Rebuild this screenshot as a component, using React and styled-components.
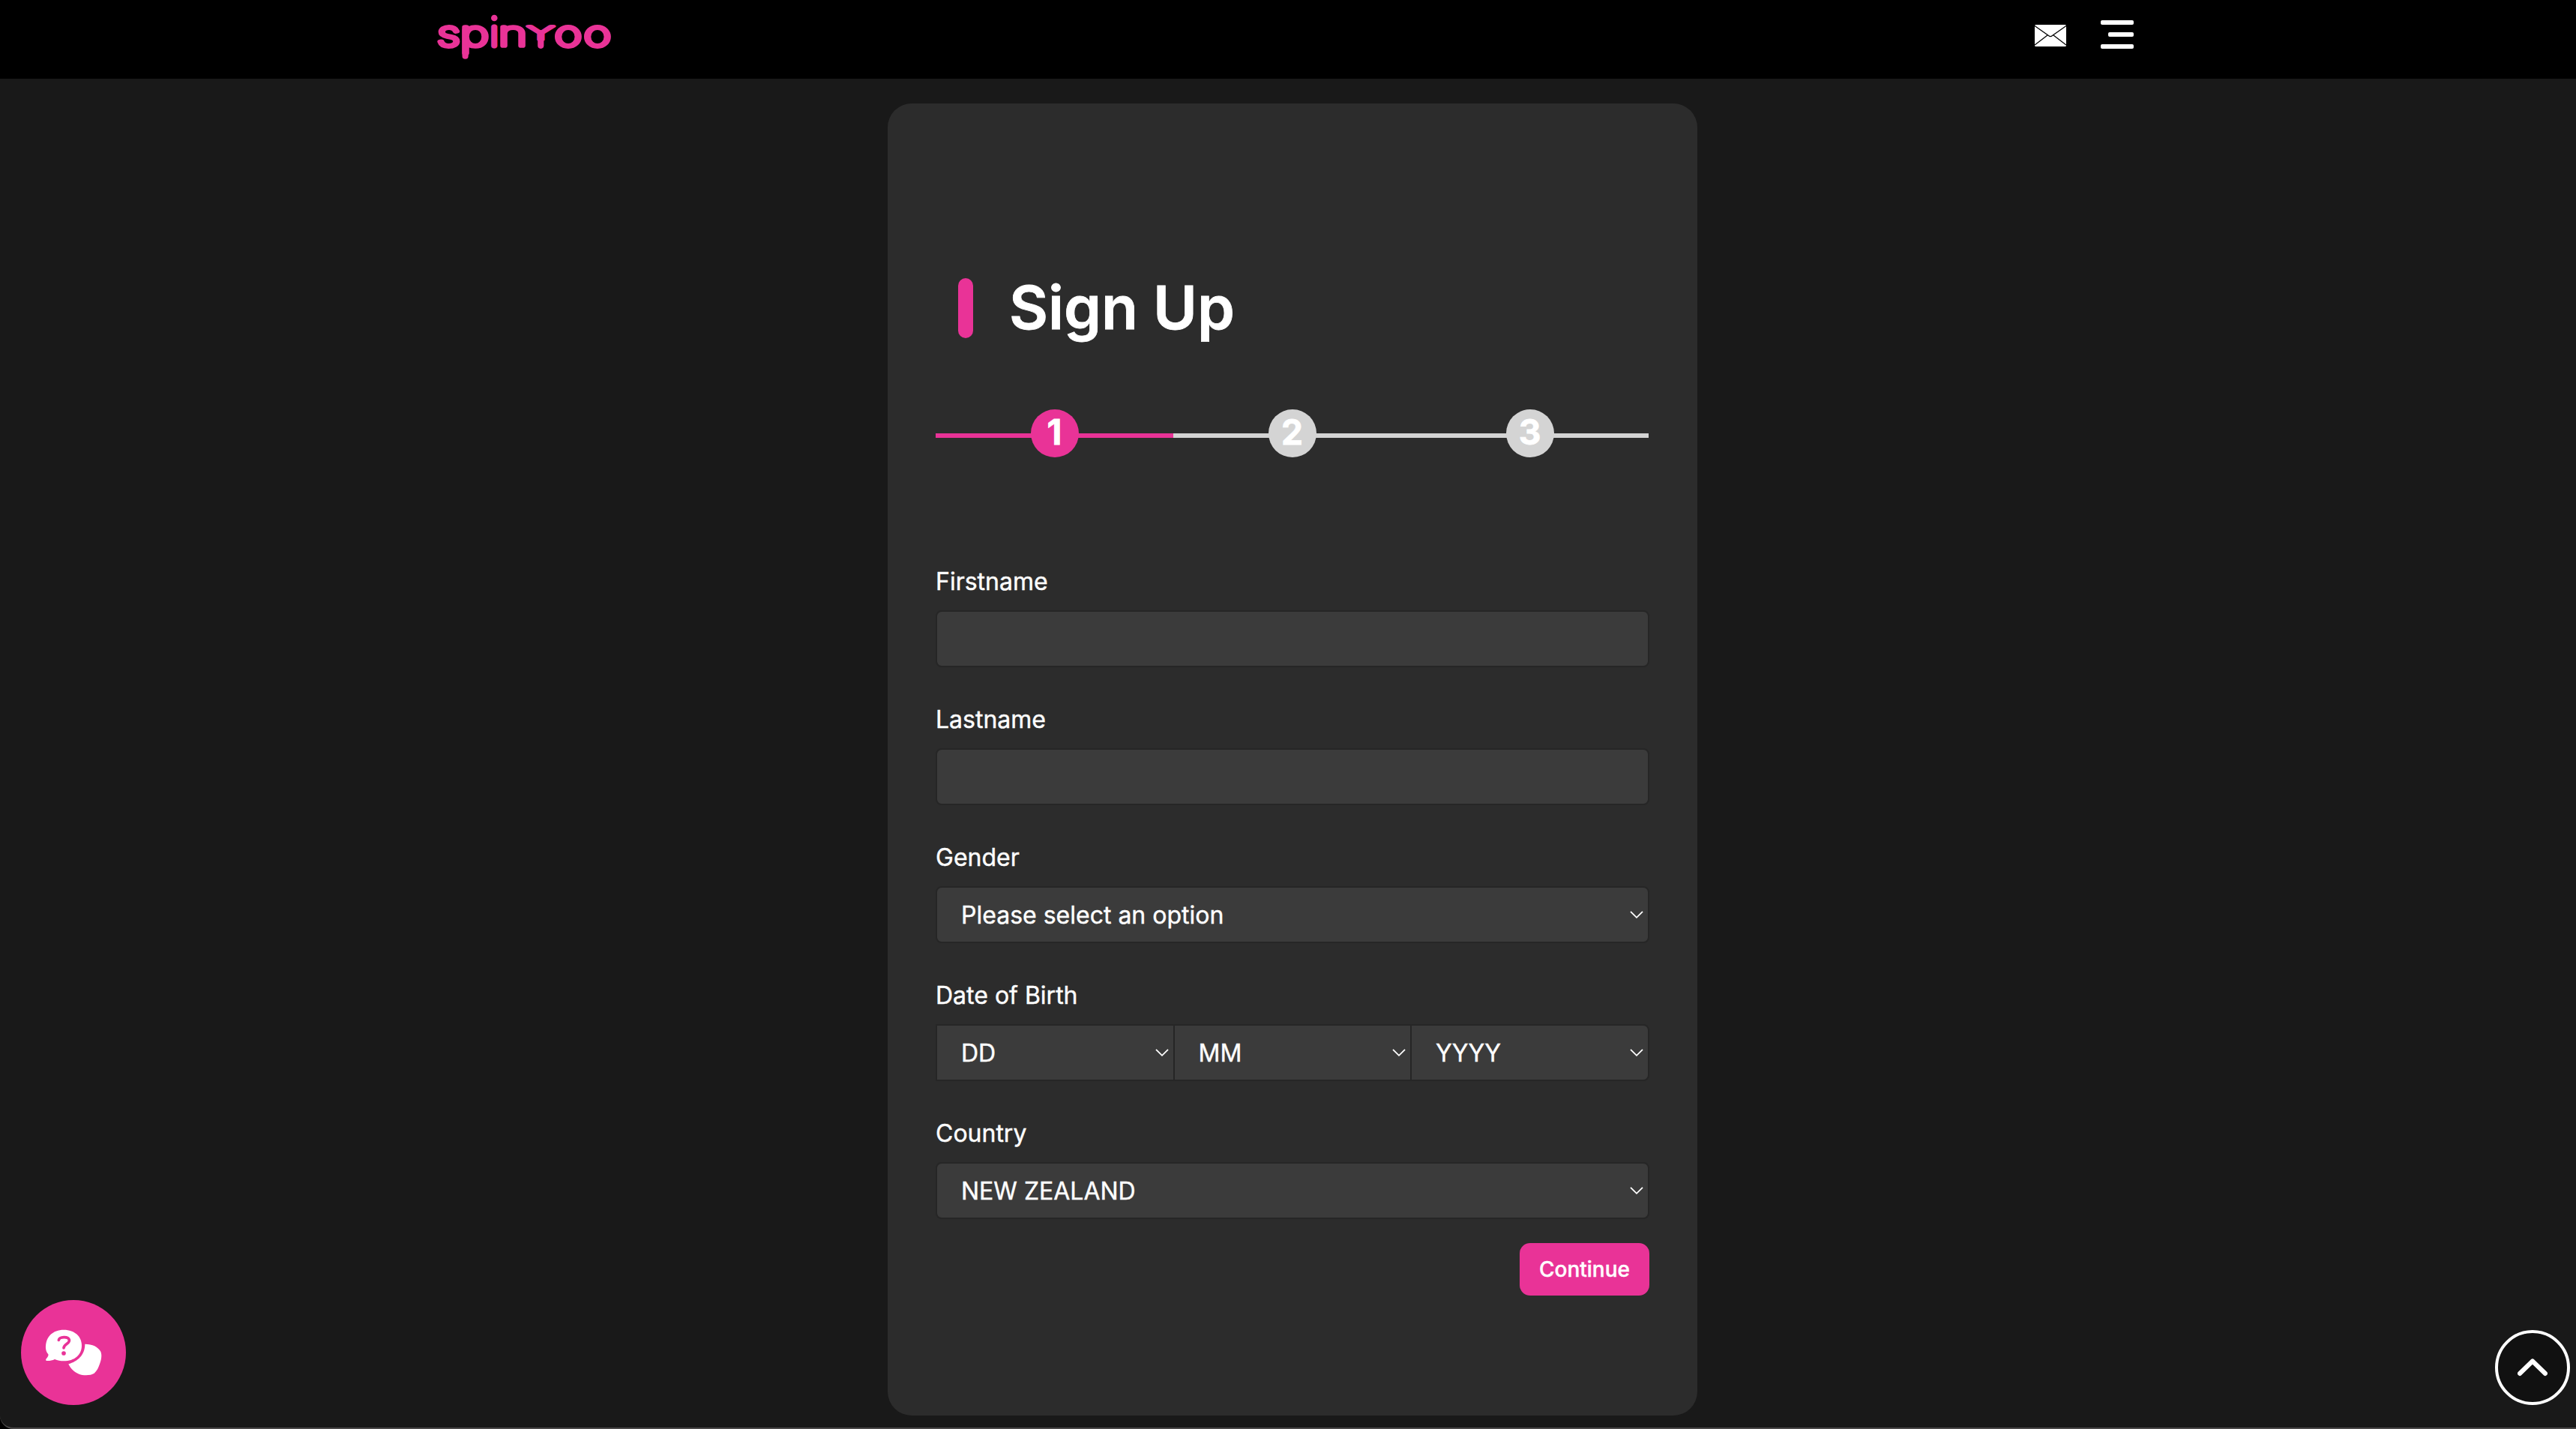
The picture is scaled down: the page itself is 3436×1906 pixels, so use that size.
import React from 'react';
import styled, { createGlobalStyle } from 'styled-components';

const PINK = '#e93397';
const GREY = '#d4d4d4';

const GlobalStyle = createGlobalStyle`
  * {
    box-sizing: border-box;
  }

  body {
    margin: 0;
    background-color: #191919;
    color: #fff;
    font-family: Inter, "Liberation Sans", sans-serif;
  }
`;

const Page = styled.div`
  position: relative;
  width: 100%;
  height: 1906px;
  overflow: hidden;
  background-color: #191919;
`;

const HeaderBar = styled.header`
  display: flex;
  justify-content: space-between;
  align-items: flex-start;
  height: 105px;
  padding: 0 590px 0 580px;
  background-color: #000;
`;

const LogoLink = styled.a`
  display: block;
  height: 105px;
`;

const LogoMark = styled.svg`
  display: block;
  overflow: visible;
  fill: ${PINK};
  stroke: ${PINK};
  stroke-width: 7px;
  stroke-linejoin: round;
  stroke-linecap: round;

  text {
    font-family: Inter, sans-serif;
    font-size: 48px;
    font-weight: 100;
    text-anchor: middle;
    vector-effect: non-scaling-stroke;
  }

  line {
    stroke-width: 8.2px;
  }
`;

const HeaderIcons = styled.div`
  display: flex;
  align-items: flex-start;
  gap: 46px;
  padding-top: 27px;
`;

const MailIcon = styled.svg`
  display: block;
  margin-top: 6px;
`;

const Burger = styled.div`
  display: flex;
  flex-direction: column;
  align-items: flex-end;
  gap: 10px;
  width: 44px;
`;

const BurgerLine = styled.span`
  width: ${props => (props.$short ? '34px' : '44px')};
  height: 6px;
  border-radius: 2px;
  background-color: #fff;
`;

const Card = styled.main`
  width: 1080px;
  height: 1750px;
  margin: 33px 0 0 1184px;
  padding: 228px 64px 0;
  border-radius: 32px;
  background-color: #2c2c2c;
`;

const TitleRow = styled.div`
  display: flex;
  align-items: center;
  gap: 48px;
  height: 90px;
  padding-left: 30px;
`;

const TitleMark = styled.span`
  width: 20px;
  height: 80px;
  border-radius: 10px;
  background-color: ${PINK};
`;

const Title = styled.h1`
  margin: 0 0 2px;
  font-size: 80px;
  font-weight: 600;
  line-height: 88px;
  white-space: nowrap;
  -webkit-text-stroke: 0.8px #fff;
`;

const Steps = styled.div`
  display: grid;
  grid-template-columns: repeat(3, 1fr);
  width: 951px;
  margin-top: 90px;
`;

const StepItem = styled.div`
  display: flex;
  justify-content: center;
  background: linear-gradient(${props => (props.$active ? PINK : GREY)}, ${props => (props.$active ? PINK : GREY)})
    0 32px / 100% 6px no-repeat;
`;

const StepDot = styled.span`
  width: 64px;
  height: 64px;
  border-radius: 50%;
  background-color: ${props => (props.$active ? PINK : GREY)};
  font-size: 46px;
  font-weight: 700;
  line-height: 61px;
  text-align: center;
  -webkit-text-stroke: 0.8px #fff;
`;

const Form = styled.form`
  display: flex;
  flex-direction: column;
  margin-top: 142px;
`;

const Field = styled.div`
  height: 184px;

  &:last-of-type {
    height: 138px;
  }
`;

const Label = styled.label`
  display: block;
  margin-bottom: 14px;
  font-size: 32px;
  line-height: 48px;
  -webkit-text-stroke: 0.4px #fff;
`;

const Input = styled.input`
  display: block;
  width: 100%;
  height: 76px;
  padding: 0 32px;
  border: 2px solid #262626;
  border-radius: 8px;
  outline: none;
  background-color: #3b3b3b;
  color: #fff;
  font: 32px Inter, sans-serif;
`;

const SelectBox = styled.button`
  display: flex;
  justify-content: space-between;
  align-items: center;
  width: 100%;
  height: 76px;
  padding: 0 6px 0 32px;
  border: 2px solid #262626;
  border-radius: 8px;
  background-color: #3b3b3b;
  color: #fff;
  font: 32px Inter, sans-serif;
  -webkit-text-stroke: 0.4px #fff;
`;

const DateRow = styled.div`
  display: grid;
  grid-template-columns: 1fr 1fr 319px;

  ${SelectBox} {
    border-right-width: 0;
    border-radius: 0;
  }

  ${SelectBox}:last-child {
    border-right-width: 2px;
    border-radius: 0 8px 8px 0;
  }
`;

const Continue = styled.button`
  align-self: flex-end;
  width: 173px;
  height: 70px;
  margin-top: 32px;
  padding: 0;
  border: 0;
  border-radius: 14px;
  background-color: ${PINK};
  color: #fff;
  font: 500 28px Inter, sans-serif;
  -webkit-text-stroke: 0.4px #fff;
`;

const ChatButton = styled.button`
  position: absolute;
  left: 28px;
  bottom: 32px;
  width: 140px;
  height: 140px;
  padding: 0;
  border: 0;
  border-radius: 50%;
  background-color: ${PINK};
`;

const TopButton = styled.button`
  position: absolute;
  right: 8px;
  bottom: 32px;
  display: flex;
  justify-content: center;
  width: 100px;
  height: 100px;
  padding: 34px 0 0;
  border: 4px solid #fff;
  border-radius: 50%;
  background-color: #111;
`;

const WindowEdge = styled.div`
  position: absolute;
  left: 0;
  right: 0;
  bottom: 0;
  height: 20px;
  border-bottom: 2px solid #4a4848;
  border-bottom-left-radius: 18px;
  box-shadow: -12px 12px 0 12px #000;
  clip-path: inset(0);
  pointer-events: none;
`;

// thin letters with a heavy round stroke, plus the long tails and the dot
const Logo = () => (
  <LogoLink>
    <LogoMark width="240" height="105" viewBox="580 0 240 105">
      <text transform="translate(598.5 61) scale(1.28 0.96)">s</text>
      <text transform="translate(633 61) scale(1.36 0.96)">p</text>
      <line x1="620.6" y1="40" x2="620.6" y2="74.7" />
      <text transform="translate(659.3 61) scale(1 0.96)">ı</text>
      <circle cx="659.3" cy="24" r="4.3" stroke="none" />
      <text transform="translate(684 61) scale(1.36 0.96)">n</text>
      <text transform="translate(721.3 53) scale(1.14 0.5)">Y</text>
      <line x1="721.3" y1="46" x2="721.3" y2="60.8" />
      <text transform="translate(758 61) scale(1.29 0.96)">o</text>
      <text transform="translate(796.8 61) scale(1.29 0.96)">o</text>
    </LogoMark>
  </LogoLink>
);

const Mail = () => (
  <MailIcon width="42" height="29" viewBox="0 0 42 29">
    <rect width="42" height="29" rx="1.5" fill="#fff" />
    <path d="M0 1.5 L18.5 14.5 Q21 16.6 23.5 14.5 L42 1.5 M0 27 L17 14 M42 27 L25 14" fill="none" stroke="#000" strokeWidth="1.3" />
  </MailIcon>
);

const Chevron = () => (
  <svg width="18" height="12" viewBox="0 0 18 12">
    <path d="M1 1.8 L9 9.8 L17 1.8" fill="none" stroke="#fff" strokeWidth="1.8" />
  </svg>
);

const Select = ({ value }) => (
  <SelectBox type="button">
    <span>{value}</span>
    <Chevron />
  </SelectBox>
);

const Header = () => {
  return (
    <HeaderBar>
      <Logo />
      <HeaderIcons>
        <Mail />
        <Burger>
          <BurgerLine />
          <BurgerLine $short />
          <BurgerLine />
        </Burger>
      </HeaderIcons>
    </HeaderBar>
  );
};

const SignUp = () => {
  return (
    <Card>
      <TitleRow>
        <TitleMark />
        <Title>Sign Up</Title>
      </TitleRow>
      <Steps>
        {[1, 2, 3].map(step => (
          <StepItem key={step} $active={step === 1}>
            <StepDot $active={step === 1}>{step}</StepDot>
          </StepItem>
        ))}
      </Steps>
      <Form>
        <Field>
          <Label>Firstname</Label>
          <Input type="text" />
        </Field>
        <Field>
          <Label>Lastname</Label>
          <Input type="text" />
        </Field>
        <Field>
          <Label>Gender</Label>
          <Select value="Please select an option" />
        </Field>
        <Field>
          <Label>Date of Birth</Label>
          <DateRow>
            <Select value="DD" />
            <Select value="MM" />
            <Select value="YYYY" />
          </DateRow>
        </Field>
        <Field>
          <Label>Country</Label>
          <Select value="NEW ZEALAND" />
        </Field>
        <Continue type="button">Continue</Continue>
      </Form>
    </Card>
  );
};

const App = () => {
  return (
    <Page>
      <GlobalStyle />
      <Header />
      <SignUp />
      <WindowEdge />
      <ChatButton>
        <svg width="140" height="140" viewBox="84 84 420 420">
          <path
            d="M340 260 C370 260 392 271 402 289 C409 302 406 322 399 340 C394 355 388 368 377 377 C364 386 335 387 316 380 C296 372 281 357 274 340 C310 329 340 305 340 260 Z"
            fill="#fff"
          />
          <path
            d="M255 203 C299 203 327 230 327 266 C327 303 298 328 255 328 C242 328 230 326 219 321 C209 326 196 328 186 327 C182 325 183 321 186 318 C191 312 195 306 193 301 C185 291 182 281 183 268 C185 230 212 203 255 203 Z"
            fill="#fff"
          />
          <path d="M235 244 C238 230 273 229 277 243 C281 259 255 259 255 276" fill="none" stroke={PINK} strokeWidth="11" strokeLinecap="round" />
          <circle cx="255" cy="297" r="8.5" fill={PINK} />
        </svg>
      </ChatButton>
      <TopButton>
        <svg width="40" height="24" viewBox="0 0 40 24">
          <path d="M3 20 L20 3.5 L37 20" fill="none" stroke="#fff" strokeWidth="6" strokeLinecap="round" strokeLinejoin="round" />
        </svg>
      </TopButton>
    </Page>
  );
};

export default App;
